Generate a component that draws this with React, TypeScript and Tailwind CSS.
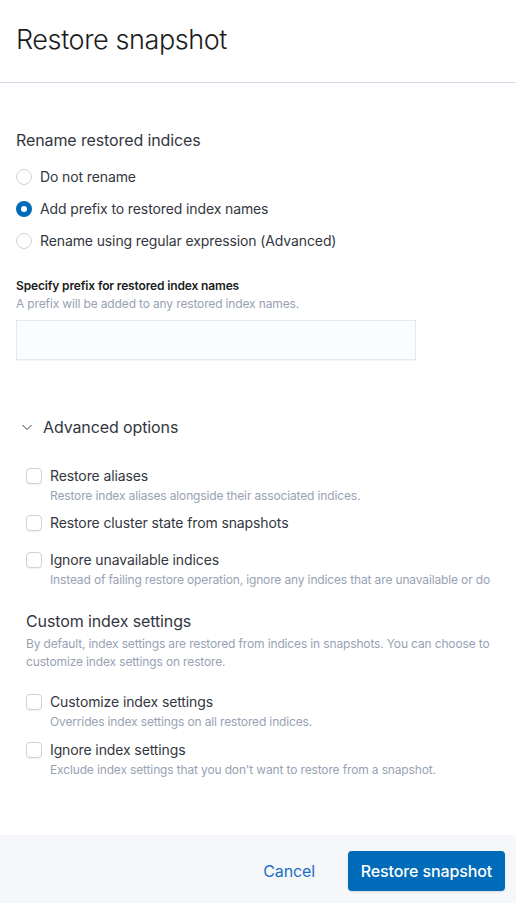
import React from "react";

const font = { fontFamily: "Inter, 'Noto Sans', sans-serif" };

function Radio({ checked, label }: { checked?: boolean; label: string }) {
  return (
    <label className="flex h-5 items-center gap-2">
      {checked ? (
        <span className="grid size-4 place-items-center rounded-full bg-[#006bb8]">
          <span className="size-[6px] rounded-full bg-white" />
        </span>
      ) : (
        <span className="size-4 rounded-full border border-[#cfd4dc] bg-white" />
      )}
      <span className="text-sm leading-5 text-[#343741]">{label}</span>
    </label>
  );
}

function Check({ label, help, className }: { label: string; help?: string; className?: string }) {
  return (
    <div className={className}>
      <label className="flex h-5 items-center gap-2">
        <span className="size-4 shrink-0 rounded-[4px] border border-[#cdd2da] bg-white shadow-[0_1px_1px_rgba(0,0,0,0.06)]" />
        <span className="text-sm leading-5 text-[#343741]">{label}</span>
      </label>
      {help && (
        <p className="mt-px whitespace-nowrap pl-6 text-xs leading-[18px] tracking-[-0.012em] text-[#98a2b3]">{help}</p>
      )}
    </div>
  );
}

export default function App() {
  return (
    <div className="flex h-[903px] w-[516px] flex-col overflow-hidden bg-white tracking-[-0.007em]" style={font}>
      <header className="border-b border-[#d3dae6] px-4 pb-6 pt-[22px]">
        <h1 className="text-[27px] font-light leading-9 tracking-[-0.015em] text-[#1a1c21]">Restore snapshot</h1>
      </header>

      <main className="flex-1 px-4 pt-[45px]">
        <h2 className="text-base leading-6 text-[#343741]">Rename restored indices</h2>
        <div className="mt-[15px] flex flex-col gap-3">
          <Radio label="Do not rename" />
          <Radio checked label="Add prefix to restored index names" />
          <Radio label="Rename using regular expression (Advanced)" />
        </div>

        <div className="mt-[26px]">
          <div className="text-xs font-semibold leading-[18px] tracking-[-0.012em] text-[#1a1c21]">Specify prefix for restored index names</div>
          <div className="text-xs leading-[18px] tracking-[-0.012em] text-[#98a2b3]">A prefix will be added to any restored index names.</div>
          <input className="mt-[7px] h-10 w-[400px] border border-[#e4e8ef] bg-[#fbfcfd] shadow-[0_1px_0_rgba(0,0,0,0.04)] outline-none" />
        </div>

        <button className="mt-[55px] flex h-6 items-center gap-[10px] pl-[5px] text-base leading-6 text-[#343741]">
          <svg width="12" height="12" viewBox="0 0 12 12" fill="none" stroke="#343741" strokeWidth="1">
            <path d="M1.5 4l4.5 4.5L10.5 4" />
          </svg>
          Advanced options
        </button>

        <div className="px-[10px]">
          <Check className="mt-[27px]" label="Restore aliases" help="Restore index aliases alongside their associated indices." />
          <Check className="mt-2" label="Restore cluster state from snapshots" />
          <Check
            className="mt-[17px]"
            label="Ignore unavailable indices"
            help="Instead of failing restore operation, ignore any indices that are unavailable or do"
          />

          <h3 className="mt-5 text-base leading-6 text-[#343741]">Custom index settings</h3>
          <p className="mt-[2px] text-xs leading-[18px] tracking-[-0.012em] text-[#98a2b3]">
            By default, index settings are restored from indices in snapshots. You can choose to customize index settings on restore.
          </p>
          <Check className="mt-[21px]" label="Customize index settings" help="Overrides index settings on all restored indices." />
          <Check className="mt-[9px]" label="Ignore index settings" help="Exclude index settings that you don't want to restore from a snapshot." />
        </div>
      </main>

      <footer className="flex h-[68px] items-start justify-end gap-[21px] bg-[#f5f7fa] pr-[11px] pt-4">
        <button className="h-10 px-3 text-base leading-10 text-[#1e6fc2]">Cancel</button>
        <button className="h-10 w-[157px] rounded-[4px] bg-[#006bb8] text-base font-medium text-white shadow-[0_1px_2px_rgba(0,0,0,0.12)]">
          Restore snapshot
        </button>
      </footer>
    </div>
  );
}
